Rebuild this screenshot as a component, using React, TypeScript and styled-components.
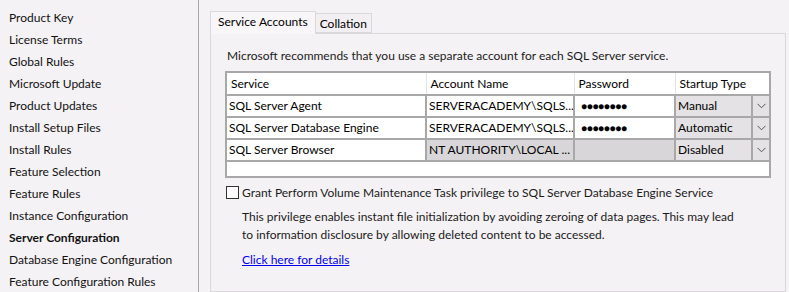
import styled, { createGlobalStyle } from "styled-components";

const GlobalStyle = createGlobalStyle`
  html, body {
    margin: 0;
    padding: 0;
    background: #f5f2f5;
  }
  body {
    font-family: Lato, "Open Sans", sans-serif;
    font-size: 12px;
    color: #000;
  }
`;

const steps = [
  "Product Key",
  "License Terms",
  "Global Rules",
  "Microsoft Update",
  "Product Updates",
  "Install Setup Files",
  "Install Rules",
  "Feature Selection",
  "Feature Rules",
  "Instance Configuration",
  "Server Configuration",
  "Database Engine Configuration",
  "Feature Configuration Rules",
];

type Service = {
  name: string;
  account: string;
  password: boolean;
  startup: string;
  locked?: boolean;
};

const services: Service[] = [
  { name: "SQL Server Agent", account: "SERVERACADEMY\\SQLS...", password: true, startup: "Manual" },
  { name: "SQL Server Database Engine", account: "SERVERACADEMY\\SQLS...", password: true, startup: "Automatic" },
  { name: "SQL Server Browser", account: "NT AUTHORITY\\LOCAL ...", password: false, startup: "Disabled", locked: true },
];

const Chevron = () => (
  <svg width="9" height="6" viewBox="0 0 9 6">
    <path d="M0.5 0.8 L4.5 4.8 L8.5 0.8" fill="none" stroke="#555" strokeWidth="1" />
  </svg>
);

const App = () => {
  return (
    <>
      <GlobalStyle />
      <Page>
        <Sidebar>
          {steps.map((s) => (
            <StepItem key={s} $active={s === "Server Configuration"}>
              {s}
            </StepItem>
          ))}
        </Sidebar>
        <Content>
          <TabRow>
            <Tab $selected>Service Accounts</Tab>
            <Tab>Collation</Tab>
          </TabRow>
          <TabPanel>
            <Intro>Microsoft recommends that you use a separate account for each SQL Server service.</Intro>
            <GridFrame>
              <Grid>
                <colgroup>
                  <col style={{ width: 199 }} />
                  <col style={{ width: 148 }} />
                  <col style={{ width: 101 }} />
                  <col style={{ width: 94 }} />
                </colgroup>
                <thead>
                  <Row>
                    <HeadCell>Service</HeadCell>
                    <HeadCell>Account Name</HeadCell>
                    <HeadCell>Password</HeadCell>
                    <HeadCell>Startup Type</HeadCell>
                  </Row>
                </thead>
                <tbody>
                  {services.map((s) => (
                    <Row key={s.name}>
                      <Cell>{s.name}</Cell>
                      <Cell $locked={s.locked}>{s.account}</Cell>
                      <Cell $locked={s.locked}>
                        {s.password && <Dots>●●●●●●●●</Dots>}
                      </Cell>
                      <ComboCell>
                        <Combo>
                          <ComboText>{s.startup}</ComboText>
                          <ComboButton>
                            <Chevron />
                          </ComboButton>
                        </Combo>
                      </ComboCell>
                    </Row>
                  ))}
                </tbody>
              </Grid>
            </GridFrame>
            <CheckRow>
              <CheckBox />
              <span>Grant Perform Volume Maintenance Task privilege to SQL Server Database Engine Service</span>
            </CheckRow>
            <Note>
              This privilege enables instant file initialization by avoiding zeroing of data pages. This may lead
              to information disclosure by allowing deleted content to be accessed.
            </Note>
            <DetailsLink href="#">Click here for details</DetailsLink>
          </TabPanel>
        </Content>
      </Page>
    </>
  );
};

const Page = styled.div`
  display: flex;
  width: 789px;
  height: 292px;
  overflow: hidden;
`;

const Sidebar = styled.nav`
  width: 199px;
  flex-shrink: 0;
  border-right: 1px solid #a8a6a8;
  padding-top: 7px;
  box-sizing: border-box;
`;

const StepItem = styled.div<{ $active?: boolean }>`
  height: 22px;
  line-height: 22px;
  padding-left: 9px;
  white-space: nowrap;
  font-weight: ${(p) => (p.$active ? 700 : 400)};
  color: #111;
`;

const Content = styled.main`
  flex: 1;
  padding: 10px 3px 0 11px;
  display: flex;
  flex-direction: column;
`;

const TabRow = styled.div`
  display: flex;
  align-items: flex-end;
  height: 23px;
`;

const Tab = styled.div<{ $selected?: boolean }>`
  height: ${(p) => (p.$selected ? 23 : 20)}px;
  line-height: 20px;
  padding: 0 ${(p) => (p.$selected ? 7 : 4)}px;
  border: 1px solid #d9d9d9;
  border-bottom: ${(p) => (p.$selected ? "none" : "1px solid #d9d9d9")};
  border-left: ${(p) => (p.$selected ? "1px solid #d9d9d9" : "none")};
  background: ${(p) => (p.$selected ? "#f8f6f8" : "#f2eff2")};
  margin-bottom: ${(p) => (p.$selected ? -1 : 0)}px;
  position: relative;
  z-index: ${(p) => (p.$selected ? 1 : 0)};
  box-sizing: border-box;
`;

const TabPanel = styled.section`
  flex: 1;
  border: 1px solid #d9d9d9;
  background: #f5f2f5;
  padding: 14px 14px 0 14px;
`;

const Intro = styled.div`
  height: 16px;
  line-height: 16px;
  padding-left: 2px;
  margin-bottom: 7px;
  color: #1a1a1a;
`;

const GridFrame = styled.div`
  width: 546px;
  height: 107px;
  box-sizing: border-box;
  border: 2px solid #a8a8a8;
  background: #fff;
`;

const Grid = styled.table`
  border-collapse: collapse;
  table-layout: fixed;
  width: 542px;
`;

const Row = styled.tr`
  height: 22px;
`;

const HeadCell = styled.th`
  padding: 0 0 0 4px;
  line-height: 18px;
  text-align: left;
  font-weight: 400;
  background: #fff;
  border-left: 1px solid #e3e3e3;
  border-bottom: 2px solid #a8a8a8;
  white-space: nowrap;
  &:first-child {
    border-left: none;
  }
`;

const Cell = styled.td<{ $locked?: boolean }>`
  padding: 0 0 0 2px;
  line-height: 18px;
  background: ${(p) => (p.$locked ? "#d8d6d8" : "#fff")};
  border-right: 2px solid #a8a8a8;
  border-bottom: 2px solid #a8a8a8;
  white-space: nowrap;
  overflow: hidden;
`;

const Dots = styled.span`
  font-size: 10px;
  letter-spacing: -0.3px;
  padding-left: 4px;
`;

const ComboCell = styled.td`
  padding: 0;
  border-bottom: 2px solid #a8a8a8;
`;

const Combo = styled.div`
  display: flex;
  height: 20px;
  background: #e4e2e4;
`;

const ComboText = styled.div`
  flex: 1;
  line-height: 20px;
  padding-left: 2px;
`;

const ComboButton = styled.div`
  width: 16px;
  border-left: 2px solid #a8a8a8;
  display: flex;
  align-items: center;
  justify-content: center;
`;

const CheckRow = styled.label`
  display: flex;
  align-items: center;
  gap: 3px;
  margin-top: 6px;
  height: 16px;
  color: #1a1a1a;
`;

const CheckBox = styled.span`
  width: 11px;
  height: 11px;
  border: 1px solid #333;
  background: #fff;
  margin-left: 1px;
`;

const Note = styled.p`
  margin: 8px 0 0 17px;
  width: 505px;
  line-height: 18px;
  color: #1a1a1a;
`;

const DetailsLink = styled.a`
  display: inline-block;
  margin: 8px 0 0 17px;
  color: #0000ee;
  text-decoration: underline;
  align-self: flex-start;
`;

export default App;
